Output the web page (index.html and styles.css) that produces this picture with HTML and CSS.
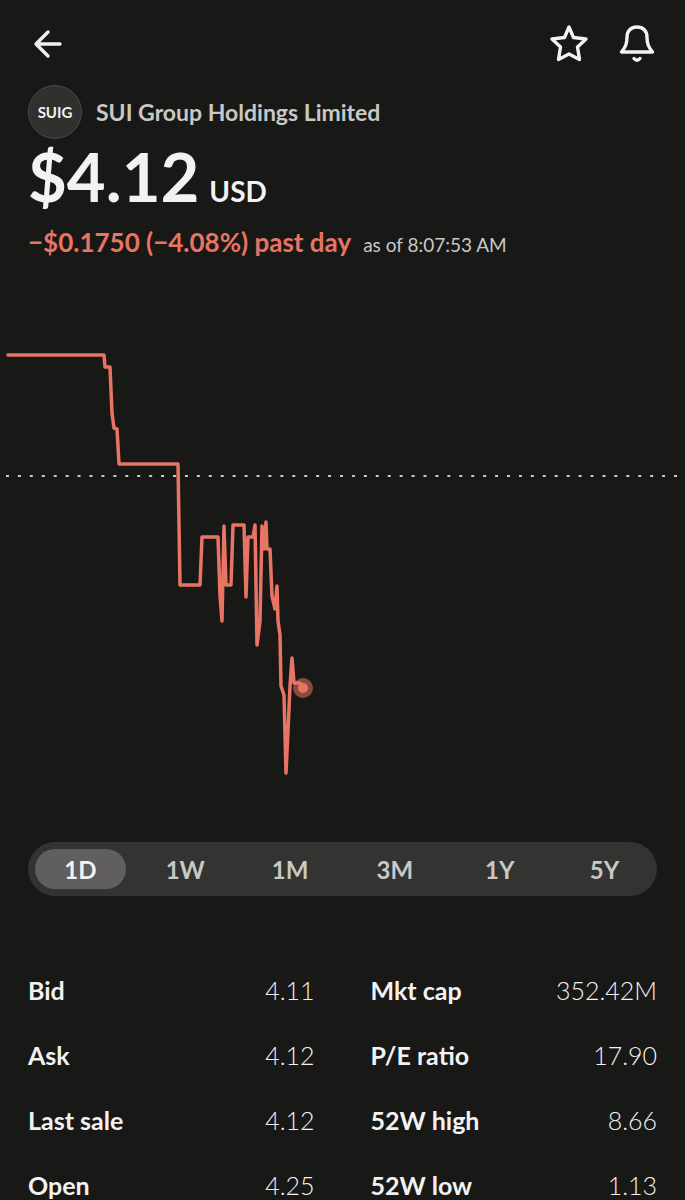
FILE: index.html
```html
<!DOCTYPE html>
<html lang="en">
<head>
    <meta charset="UTF-8">
    <meta name="viewport" content="width=device-width, initial-scale=1.0">
    <title>SUIG</title>
    <link rel="stylesheet" href="styles.css">
</head>
<body>

    <header class="topbar">
        <button class="icon-button" aria-label="Back">
            <svg width="40" height="40" viewBox="0 0 40 40"><path d="M20 8 8 20 20 32M8 20H32"/></svg>
        </button>
        <div class="actions">
            <button class="icon-button" aria-label="Add to watchlist">
                <svg width="40" height="40" viewBox="0 0 40 40"><path d="M20 3 24.500 13.500 37 15 28.500 23 30.500 35.500 20 30 9.500 35.500 11.500 23 3 15 15.500 13.500Z"/></svg>
            </button>
            <button class="icon-button" aria-label="Alerts">
                <svg width="40" height="40" viewBox="0 0 40 40"><path d="M20 3C14 3 10 7 10 13 10 20 8.500 23 4.500 28H35.500C31.500 23 30 20 30 13 30 7 26 3 20 3ZM17 34.500Q20 38 23 34.500"/></svg>
            </button>
        </div>
    </header>

    <main>
        <section class="quote">
            <div class="company">
                <span class="logo">SUIG</span>
                <h1>SUI Group Holdings Limited</h1>
            </div>
            <p class="price">$4.12 <span class="currency">USD</span></p>
            <p class="change">−$0.1750 (−4.08%) past day <span class="time">as of 8:07:53 AM</span></p>
        </section>

        <svg class="chart" viewBox="0 0 685 560" role="img" aria-label="Price over the past day">
            <line class="previous-close" x1="6" y1="205" x2="677" y2="205" pathLength="675"/>
            <polyline class="price-line" points="8,84 104,84 105,96 110,96 112,142 114,157 117,158 119,193 178,193 180,314 200,314 202,266 218,266 220,325 222,350 224,255 226,314 231,314 233,254 244,254 246,326 248,266 253,266 255,254 257,374 260,350 262,255 264,278 266,251 267,278 270,278 272,325 275,338 277,315 278,350 280,364 281,415 284,424 286,502 288,460 290,415 292,387 294,412 300,412 303,417"/>
            <circle class="halo" cx="303" cy="417" r="10"/>
            <circle class="dot" cx="303" cy="417" r="5"/>
        </svg>

        <nav class="ranges" aria-label="Chart range">
            <button class="range active">1D</button>
            <button class="range">1W</button>
            <button class="range">1M</button>
            <button class="range">3M</button>
            <button class="range">1Y</button>
            <button class="range">5Y</button>
        </nav>

        <section class="stats">
            <table>
                <tr><th scope="row">Bid</th><td>4.11</td></tr>
                <tr><th scope="row">Ask</th><td>4.12</td></tr>
                <tr><th scope="row">Last sale</th><td>4.12</td></tr>
                <tr><th scope="row">Open</th><td>4.25</td></tr>
            </table>
            <table>
                <tr><th scope="row">Mkt cap</th><td>352.42M</td></tr>
                <tr><th scope="row">P/E ratio</th><td>17.90</td></tr>
                <tr><th scope="row">52W high</th><td>8.66</td></tr>
                <tr><th scope="row">52W low</th><td>1.13</td></tr>
            </table>
        </section>
    </main>

</body>
</html>
```
FILE: styles.css
```css
* {
    box-sizing: border-box;
}

body {
    margin: 0;
    background: #181816;
    color: #f2f2f2;
    font-family: Lato, sans-serif;
}

h1,
p {
    margin: 0;
}

button {
    padding: 0;
    border: 0;
    background: none;
    color: inherit;
    font: inherit;
    cursor: pointer;
}

.topbar {
    display: flex;
    justify-content: space-between;
    padding: 24px 28px 21px;
}

.actions {
    display: flex;
    gap: 28px;
}

.icon-button {
    display: block;
    height: 40px;
}

.icon-button svg {
    display: block;
    fill: none;
    stroke: #f2f2f2;
    stroke-width: 3.4;
    stroke-linecap: round;
    stroke-linejoin: round;
}

.quote {
    padding: 0 28px;
}

.company {
    display: flex;
    align-items: center;
    gap: 14px;
}

.logo {
    display: flex;
    align-items: center;
    justify-content: center;
    width: 54px;
    height: 54px;
    border: 1px solid #484846;
    border-radius: 50%;
    background: #30302e;
    font-size: 15px;
    font-weight: 700;
}

h1 {
    color: #c8c8c6;
    font-size: 23px;
    font-weight: 700;
}

.price {
    display: flex;
    align-items: baseline;
    gap: 10px;
    font-size: 67px;
    font-weight: 700;
    line-height: 74px;
}

.currency {
    font-size: 28px;
}

.change {
    display: flex;
    align-items: baseline;
    gap: 12px;
    color: #e87464;
    font-size: 26px;
    font-weight: 700;
    line-height: 28px;
}

.time {
    color: #c8c8c6;
    font-size: 19px;
    font-weight: 400;
}

.chart {
    display: block;
    width: 100%;
    margin-top: 12px;
}

.previous-close {
    stroke: #c8c8c6;
    stroke-width: 2;
    stroke-dasharray: 3 9;
}

.price-line {
    fill: none;
    stroke: #e87464;
    stroke-width: 3.5;
    stroke-linecap: round;
    stroke-linejoin: round;
}

.halo {
    fill: #e87464;
    opacity: 0.55;
}

.dot {
    fill: #e87464;
}

.ranges {
    display: grid;
    grid-template-columns: repeat(6, 1fr);
    gap: 14px;
    margin: 11px 28px 0;
    padding: 7px;
    border-radius: 27px;
    background: #333331;
}

.range {
    height: 40px;
    border-radius: 20px;
    color: #c8c8c6;
    font-size: 24px;
    font-weight: 700;
}

.range.active {
    background: #605f5d;
    color: #f2f2f2;
}

.stats {
    display: grid;
    grid-template-columns: 1fr 1fr;
    gap: 56px;
    padding: 44px 28px 0;
}

table {
    width: 100%;
    border-collapse: collapse;
}

th,
td {
    padding: 35px 0 0;
    font-size: 25px;
    line-height: 30px;
}

th {
    text-align: left;
    font-weight: 700;
}

td {
    text-align: right;
    font-weight: 300;
}
```
